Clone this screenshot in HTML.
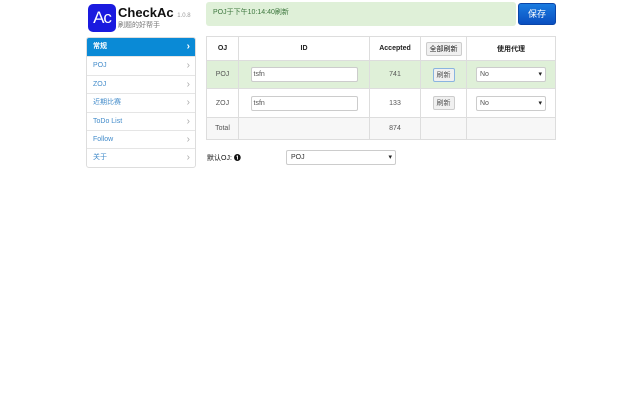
<!DOCTYPE html>
<html><head><meta charset="utf-8"><style>
*{box-sizing:border-box;margin:0;padding:0}
body{width:640px;height:400px;background:#fff;font-family:"Liberation Sans","Noto Sans CJK SC",sans-serif;font-size:7px;color:#333;position:relative;overflow:hidden}
.abs{position:absolute}
.logo{left:88px;top:4px;width:28px;height:28px;background:#1a1adf;border-radius:5px;color:#fff;font-size:17px;line-height:28px;text-align:center;letter-spacing:-1px}
.side{left:86px;top:37px;width:110px;border:1px solid #ddd;border-radius:3px;background:#fff}
.side div{height:18.4px;line-height:18px;padding-left:6px;color:#428bca;border-top:1px solid #e5e5e5;position:relative}
.side div:first-child{border-top:none;background:#0a8ad6;color:#fff;font-weight:bold;border-radius:2px 2px 0 0}
.side div:after{content:"›";position:absolute;right:5px;top:0;color:#aaa;font-size:10px}
.side div:first-child:after{color:#fff}
.alert{left:206px;top:2px;width:310px;height:24px;background:#dff0d8;border-radius:3px;color:#3c763d;line-height:22px;padding-left:7px}
.save{left:518px;top:3px;width:38px;height:22px;background:linear-gradient(#1a7be0,#0a4fc0);border:1px solid #0a45a8;border-radius:3px;color:#fff;font-size:9px;text-align:center;line-height:20px}
table{position:absolute;left:206px;top:36px;width:350px;border-collapse:collapse;border:1px solid #ddd}
td{border:1px solid #ddd;text-align:center;color:#555}
th{border:1px solid #ddd;font-size:7px;color:#222}
.inp{width:107px;height:15px;border:1px solid #ccc;border-radius:2px;margin:0 auto;text-align:left;padding-left:2px;line-height:13px;background:#fff}
.btn{display:inline-block;border:1px solid #ccc;border-radius:2px;background:#f0f0f0;padding:1px 3px}
.sel{width:70px;height:15px;border:1px solid #ccc;border-radius:2px;margin:0 auto;text-align:left;padding-left:3px;line-height:13px;background:#fff;position:relative}
.sel:after{content:"▾";position:absolute;right:3px;top:0;color:#222}
.dsel{position:absolute;left:286px;top:150px;width:110px;height:15px;border:1px solid #ccc;border-radius:2px;padding-left:4px;line-height:13px;background:#fff}
.dsel:after{content:"▾";position:absolute;right:3px;top:0;color:#222}
</style></head><body>
<div class="abs logo">Ac</div>
<div class="abs" style="left:118px;top:5px;font-size:13px;font-weight:bold;color:#111">CheckAc <span style="font-size:6px;font-weight:normal;color:#999">1.0.8</span></div>
<div class="abs" style="left:118px;top:20px;color:#777;font-size:7px">刷题的好帮手</div>
<div class="abs side"><div>常规</div><div>POJ</div><div>ZOJ</div><div>近期比赛</div><div>ToDo List</div><div>Follow</div><div>关于</div></div>
<div class="abs alert">POJ于下午10:14:40刷新</div>
<div class="abs save">保存</div>
<table>
<tr style="height:24px"><th style="width:32px">OJ</th><th style="width:131px">ID</th><th style="width:51px">Accepted</th><th style="width:46px"><span class="btn" style="font-weight:normal">全部刷新</span></th><th>使用代理</th></tr>
<tr style="height:28px;background:#dff0d8"><td>POJ</td><td><div class="inp">tsfn</div></td><td>741</td><td><span class="btn" style="border-color:#8ab4e0">刷新</span></td><td><div class="sel">No</div></td></tr>
<tr style="height:29px"><td>ZOJ</td><td><div class="inp">tsfn</div></td><td>133</td><td><span class="btn">刷新</span></td><td><div class="sel">No</div></td></tr>
<tr style="height:22px;background:#f7f7f7"><td>Total</td><td></td><td>874</td><td></td><td></td></tr>
</table>
<div class="abs" style="left:207px;top:153px;color:#111">默认OJ: <b>❶</b></div>
<div class="dsel">POJ</div>
</body></html>
